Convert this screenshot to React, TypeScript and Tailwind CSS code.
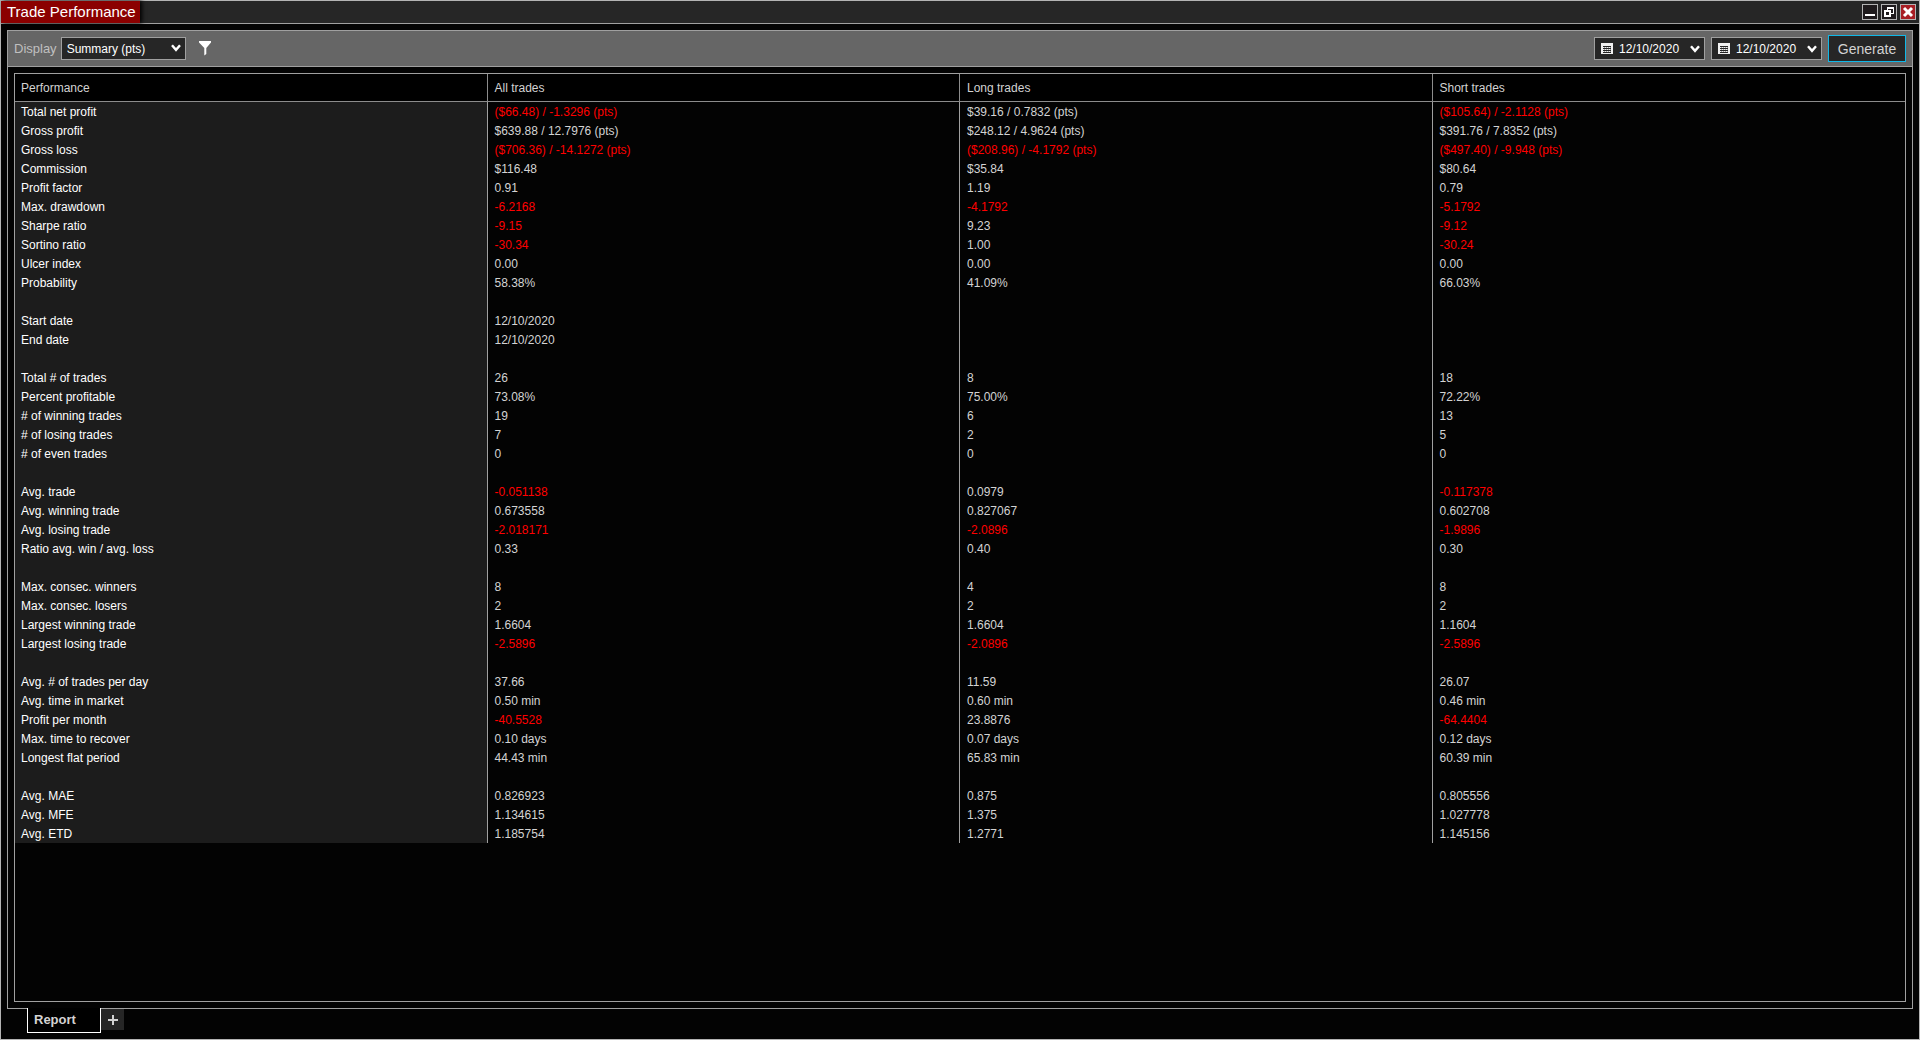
import { useState } from "react";

type Row = { label: string; values: [string, string, string] } | null;

const columns = ["Performance", "All trades", "Long trades", "Short trades"];

function row(label: string, all: string, long: string, short: string): Row {
  return { label, values: [all, long, short] };
}

// null is a spacer line between groups
const rows: Row[] = [
  row("Total net profit", "($66.48) / -1.3296 (pts)", "$39.16 / 0.7832 (pts)", "($105.64) / -2.1128 (pts)"),
  row("Gross profit", "$639.88 / 12.7976 (pts)", "$248.12 / 4.9624 (pts)", "$391.76 / 7.8352 (pts)"),
  row("Gross loss", "($706.36) / -14.1272 (pts)", "($208.96) / -4.1792 (pts)", "($497.40) / -9.948 (pts)"),
  row("Commission", "$116.48", "$35.84", "$80.64"),
  row("Profit factor", "0.91", "1.19", "0.79"),
  row("Max. drawdown", "-6.2168", "-4.1792", "-5.1792"),
  row("Sharpe ratio", "-9.15", "9.23", "-9.12"),
  row("Sortino ratio", "-30.34", "1.00", "-30.24"),
  row("Ulcer index", "0.00", "0.00", "0.00"),
  row("Probability", "58.38%", "41.09%", "66.03%"),
  null,
  row("Start date", "12/10/2020", "", ""),
  row("End date", "12/10/2020", "", ""),
  null,
  row("Total # of trades", "26", "8", "18"),
  row("Percent profitable", "73.08%", "75.00%", "72.22%"),
  row("# of winning trades", "19", "6", "13"),
  row("# of losing trades", "7", "2", "5"),
  row("# of even trades", "0", "0", "0"),
  null,
  row("Avg. trade", "-0.051138", "0.0979", "-0.117378"),
  row("Avg. winning trade", "0.673558", "0.827067", "0.602708"),
  row("Avg. losing trade", "-2.018171", "-2.0896", "-1.9896"),
  row("Ratio avg. win / avg. loss", "0.33", "0.40", "0.30"),
  null,
  row("Max. consec. winners", "8", "4", "8"),
  row("Max. consec. losers", "2", "2", "2"),
  row("Largest winning trade", "1.6604", "1.6604", "1.1604"),
  row("Largest losing trade", "-2.5896", "-2.0896", "-2.5896"),
  null,
  row("Avg. # of trades per day", "37.66", "11.59", "26.07"),
  row("Avg. time in market", "0.50 min", "0.60 min", "0.46 min"),
  row("Profit per month", "-40.5528", "23.8876", "-64.4404"),
  row("Max. time to recover", "0.10 days", "0.07 days", "0.12 days"),
  row("Longest flat period", "44.43 min", "65.83 min", "60.39 min"),
  null,
  row("Avg. MAE", "0.826923", "0.875", "0.805556"),
  row("Avg. MFE", "1.134615", "1.375", "1.027778"),
  row("Avg. ETD", "1.185754", "1.2771", "1.145156"),
];

function isNegative(value: string) {
  return value.startsWith("-") || value.startsWith("(");
}

function Chevron({ className }: { className?: string }) {
  return (
    <svg viewBox="0 0 10 8" className={`h-2 w-[10px] ${className ?? ""}`} fill="none" stroke="#fff" strokeWidth="2.400" aria-hidden="true">
      <path d="M1 1.200 5 5.800l4-4.600" />
    </svg>
  );
}

function CalendarIcon() {
  return (
    <svg viewBox="0 0 12 11" className="h-[11px] w-3 shrink-0" shapeRendering="crispEdges" aria-hidden="true">
      <path d="M0 0h12v11H0z" fill="#f0f0f0" />
      <path d="M2 3h8v1H2zM2 5h8v1H2zM2 7h8v1H2zM2 9h8v1H2z" fill="#262626" />
      <path d="M3 3h1v7H3zM5 3h1v7H5zM7 3h1v7H7zM9 3h1v7H9z" fill="#262626" fillOpacity="0.4" />
    </svg>
  );
}

function DatePicker({ label, value, onChange }: { label: string; value: string; onChange: (v: string) => void }) {
  return (
    <div className="flex h-[23px] w-[111px] items-center border border-[#a0a0a0] bg-[#262626] pl-1.5 pr-1">
      <CalendarIcon />
      <input
        type="text"
        aria-label={label}
        value={value}
        onChange={(e) => onChange(e.target.value)}
        className="ml-1.5 min-w-0 flex-1 bg-transparent text-xs text-white outline-none"
      />
      <button type="button" aria-label={`Open ${label}`} className="flex">
        <Chevron />
      </button>
    </div>
  );
}

function TitleBar() {
  return (
    <header className="flex h-[23px] items-center justify-between border-b border-[#a0a0a0] bg-[#262626]">
      <h1 className="flex h-full items-center bg-[#8b0000] pl-1.5 pr-1 text-[15px] text-white shadow-[2px_0_4px_#000]">
        Trade Performance
      </h1>
      <div className="flex gap-[3px] pr-[3px]">
        <button type="button" aria-label="Minimize" className="size-4 border border-[#b4b4b4] bg-[#1e1a1c]">
          <svg viewBox="0 0 14 14" shapeRendering="crispEdges" aria-hidden="true">
            <path d="M2 9h10v2H2z" fill="#fff" />
          </svg>
        </button>
        <button type="button" aria-label="Restore" className="size-4 border border-[#b4b4b4] bg-[#1e1a1c]">
          <svg viewBox="0 0 14 14" shapeRendering="crispEdges" fill="#fff" fillRule="evenodd" aria-hidden="true">
            <path d="M5 2h7v7H9V8h2V4H6v1H5z" />
            <path d="M2 5h7v7H2zM4 7h3v3H4z" />
          </svg>
        </button>
        <button type="button" aria-label="Close" className="size-4 border border-[#b4b4b4] bg-[#a81e24]">
          <svg viewBox="0 0 14 14" stroke="#fff" strokeWidth="3" aria-hidden="true">
            <path d="m3 3 8 8M11 3l-8 8" />
          </svg>
        </button>
      </div>
    </header>
  );
}

export default function App() {
  const [display, setDisplay] = useState("Summary (pts)");
  const [from, setFrom] = useState("12/10/2020");
  const [to, setTo] = useState("12/10/2020");

  return (
    <div className="flex min-h-screen flex-col border border-[#b4b4b4] bg-[#030303] font-['Liberation_Sans',Arial,sans-serif] text-xs text-[#d3d3d3]">
      <TitleBar />
      <main className="mx-1.5 mt-1.5 flex flex-1 flex-col border border-[#a0a0a0]">
        <div className="flex h-9 items-center justify-between border-b border-[#a0a0a0] bg-[#666] px-1.5">
          <div className="flex items-center">
            <label htmlFor="display" className="text-[13px] text-[#c0c0c0]">
              Display
            </label>
            <div className="relative ml-1">
              <select
                id="display"
                value={display}
                onChange={(e) => setDisplay(e.target.value)}
                className="block h-[23px] w-[125px] appearance-none border border-[#a0a0a0] bg-[#262626] pl-[5px] text-xs text-white outline-none"
              >
                <option>Summary (pts)</option>
              </select>
              <Chevron className="pointer-events-none absolute right-[5px] top-[7px]" />
            </div>
            <button type="button" aria-label="Filter" className="ml-[13px]">
              <svg viewBox="0 0 12 15" className="h-[15px] w-3" fill="#fff" aria-hidden="true">
                <path d="M0 0h12v1.500L7.300 7v6L5.300 14.500V7L0 1.500z" />
              </svg>
            </button>
          </div>
          <div className="flex items-center gap-1.5">
            <DatePicker label="Start date" value={from} onChange={setFrom} />
            <DatePicker label="End date" value={to} onChange={setTo} />
            <button type="button" className="h-[27px] w-[78px] border border-[#10b8e8] bg-[#262626] text-sm">
              Generate
            </button>
          </div>
        </div>

        <div className="m-1.5 flex-1 border border-[#a0a0a0]">
          <table className="w-full table-fixed border-separate border-spacing-0 text-left">
            <thead>
              <tr className="h-7 bg-black">
                {columns.map((c) => (
                  <th
                    key={c}
                    className="border-b border-r border-[#8c8c8c] pl-[7px] pr-1.5 font-normal first:pl-1.5 last:border-r-0"
                  >
                    {c}
                  </th>
                ))}
              </tr>
            </thead>
            <tbody>
              {rows.map((r, i) => (
                <tr key={i} className="h-[19px] leading-4">
                  <th className="border-r border-[#a0a0a0] bg-[#1c1c1c] px-1.5 font-normal text-white">{r?.label}</th>
                  {[0, 1, 2].map((n) => {
                    const value = r?.values[n] ?? "";
                    return (
                      <td
                        key={n}
                        className={`border-r border-[#a0a0a0] pl-[7px] pr-1.5 last:border-r-0 ${isNegative(value) ? "text-[#ff0000]" : ""}`}
                      >
                        {value}
                      </td>
                    );
                  })}
                </tr>
              ))}
            </tbody>
          </table>
        </div>
      </main>

      <nav className="flex h-[30px] items-start pl-[26px]">
        {/* the active tab covers the panel's bottom border */}
        <button
          type="button"
          className="relative -mt-px h-[25px] w-[74px] border border-t-0 border-white bg-black pl-1.5 text-left text-[13px] font-bold"
        >
          Report
        </button>
        <button type="button" aria-label="Add tab" className="flex h-[21px] w-[23px] items-center justify-center bg-[#262626]">
          <svg viewBox="0 0 10 10" className="size-[10px]" fill="#d3d3d3" shapeRendering="crispEdges" aria-hidden="true">
            <path d="M4 0h2v10H4zM0 4h10v2H0z" />
          </svg>
        </button>
      </nav>
    </div>
  );
}
